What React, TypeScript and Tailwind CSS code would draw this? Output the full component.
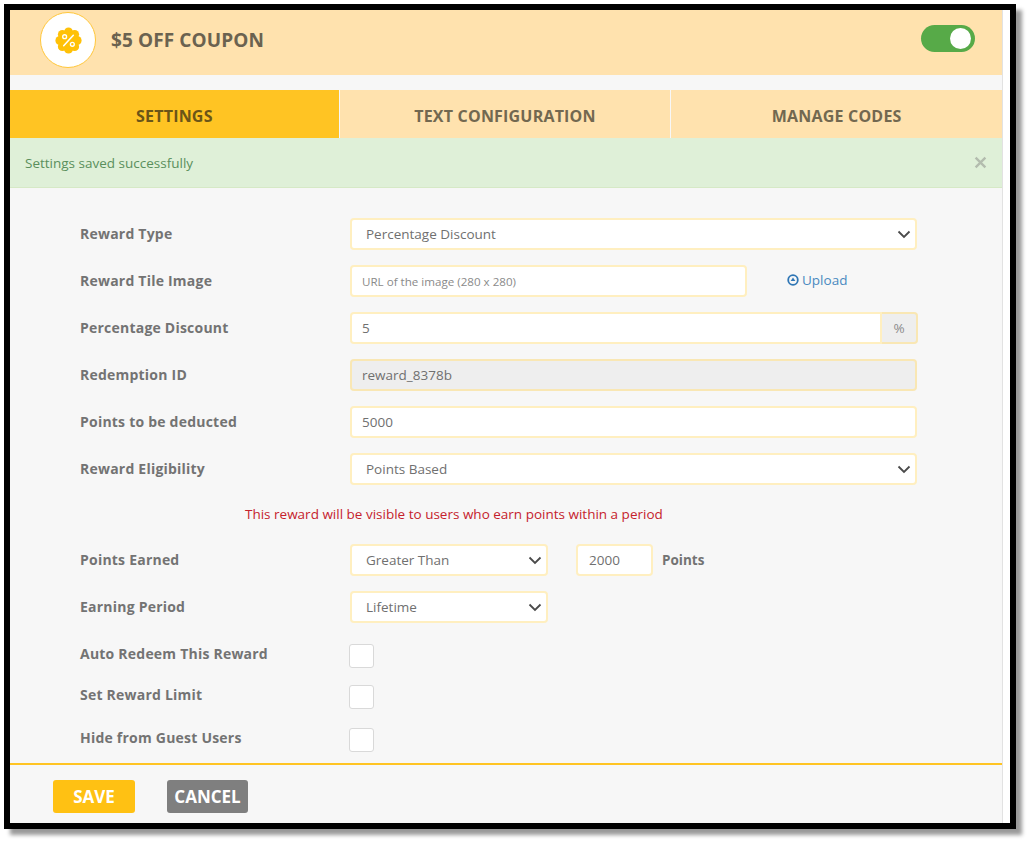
import React from 'react';

const font = { fontFamily: '"Open Sans", sans-serif' };

const Label = ({ children }: { children: React.ReactNode }) => (
  <label className="w-[340px] shrink-0 pl-[70px] pb-[2px] text-[14px] font-bold tracking-[0.22px] text-[#737373]">{children}</label>
);

const Chevron = () => (
  <svg viewBox="0 0 14 9" className="absolute right-[6px] top-[12px] w-[14px] h-[9px] pointer-events-none">
    <path d="M1.5 1.5L7 7l5.5-5.5" fill="none" stroke="#4a4a4a" strokeWidth="1.8" />
  </svg>
);

const Select = ({ value, width }: { value: string; width: string }) => (
  <div className={`relative ${width}`}>
    <select
      defaultValue={value}
      className="w-full h-[32px] appearance-none bg-white border-2 border-[#ffefc0] rounded-[4px] pl-[14px] text-[13.5px] text-[#707070] outline-none"
    >
      <option>{value}</option>
    </select>
    <Chevron />
  </div>
);

const Row = ({ label, children }: { label: string; children: React.ReactNode }) => (
  <div className="flex items-center h-[32px]">
    <Label>{label}</Label>
    {children}
  </div>
);

const CheckRow = ({ label, className }: { label: string; className?: string }) => (
  <div className={`flex items-center h-[24px] ${className ?? ''}`}>
    <label className="w-[339px] shrink-0 pl-[70px] pb-[6px] text-[14px] font-bold tracking-[0.22px] text-[#737373]">{label}</label>
    <span className="w-[25px] h-[24px] bg-white border border-[#d9d9d9] rounded-[3px]" />
  </div>
);

const Tab = ({ label, width, active }: { label: string; width: string; active?: boolean }) => (
  <div
    className={`${width} h-full flex items-center justify-center pt-[3px] text-[16px] font-bold tracking-[0.2px] ${
      active ? 'bg-[#ffc423] text-[#6b5518]' : 'bg-[#ffe2ae] text-[#726850]'
    }`}
  >
    {label}
  </div>
);

const BadgeIcon = () => (
  <svg viewBox="0 0 28 28" className="w-[27px] h-[27px]">
    <g fill="#ffc107">
      <circle cx="14" cy="14" r="10.5" />
      <circle cx="14" cy="5" r="4.6" />
      <circle cx="14" cy="23" r="4.6" />
      <circle cx="5" cy="14" r="4.6" />
      <circle cx="23" cy="14" r="4.6" />
      <circle cx="7.6" cy="7.6" r="4.6" />
      <circle cx="20.4" cy="7.6" r="4.6" />
      <circle cx="7.6" cy="20.4" r="4.6" />
      <circle cx="20.4" cy="20.4" r="4.6" />
    </g>
    <path d="M9 19.5L19 8.5" stroke="#fff" strokeWidth="1.6" strokeLinecap="round" />
    <circle cx="10" cy="10" r="2" fill="none" stroke="#fff" strokeWidth="1.4" />
    <circle cx="18" cy="18" r="2" fill="none" stroke="#fff" strokeWidth="1.4" />
  </svg>
);

const UploadIcon = () => (
  <svg viewBox="0 0 12 12" className="w-[12px] h-[12px] mr-[3px]">
    <circle cx="6" cy="6" r="4.8" fill="none" stroke="#2f76b5" strokeWidth="1.8" />
    <path d="M6 3.4L8.4 7H3.6z" fill="#2f76b5" />
  </svg>
);

export default function App() {
  return (
    <div className="pl-[4px] pt-[4px] bg-white w-[1029px] h-[842px]" style={font}>
      <div className="w-[1012px] h-[825px] border-[6px] border-black bg-white shadow-[6px_6px_4px_rgba(0,0,0,0.4)]">
        <div className="w-[993px] h-full bg-[#f7f7f7] border-r border-[#e2e2e2]">
          {/* Header */}
          <div className="h-[65px] bg-[#ffe2ae] flex items-center justify-between pl-[30px] pr-[27px] pb-[5px]">
            <div className="flex items-center">
              <div className="w-[56px] h-[56px] rounded-full bg-white border border-[#ffc73a] flex items-center justify-center">
                <BadgeIcon />
              </div>
              <h1 className="ml-[15px] text-[19px] font-bold tracking-[0.1px] text-[#6b6250]">$5 OFF COUPON</h1>
            </div>
            <div className="w-[54px] h-[27px] mb-[3px] rounded-full bg-[#57aa48] flex items-center justify-end pr-[4px]">
              <span className="w-[21px] h-[21px] rounded-full bg-white" />
            </div>
          </div>

          {/* Tabs */}
          <div className="mt-[15px] h-[48px] flex gap-px">
            <Tab label="SETTINGS" width="w-[329px]" active />
            <Tab label="TEXT CONFIGURATION" width="w-[331px]" />
            <Tab label="MANAGE CODES" width="w-[331px]" />
          </div>

          {/* Alert */}
          <div className="h-[50px] bg-[#dff0d8] border-b border-[#d6e9c6] flex items-center justify-between pl-[15px] pr-[15px]">
            <span className="pt-[1px] text-[13.5px] text-[#5a8f5c]">Settings saved successfully</span>
            <svg viewBox="0 0 12 12" className="w-[13px] h-[13px]">
              <path d="M1.5 1.5l9 9M10.5 1.5l-9 9" stroke="#b3bcae" strokeWidth="2.2" />
            </svg>
          </div>

          {/* Form */}
          <div className="pt-[30px] flex flex-col gap-[15px]">
            <Row label="Reward Type">
              <Select value="Percentage Discount" width="w-[567px]" />
            </Row>
            <Row label="Reward Tile Image">
              <input
                placeholder="URL of the image (280 x 280)"
                className="w-[397px] h-[32px] bg-white border-2 border-[#ffefc0] rounded-[4px] pl-[10px] text-[11.6px] placeholder:text-[#8a8a8a] outline-none"
              />
              <a className="ml-[40px] pb-[2px] flex items-center text-[13.5px] text-[#4a89c0]">
                <UploadIcon />
                Upload
              </a>
            </Row>
            <Row label="Percentage Discount">
              <div className="flex w-[568px] h-[32px]">
                <input
                  readOnly
                  value="5"
                  className="flex-1 min-w-0 bg-white border-2 border-[#ffefc0] rounded-l-[4px] pl-[10px] text-[13.5px] text-[#707070] outline-none"
                />
                <span className="w-[36px] flex items-center justify-center bg-[#eeeeee] border-2 border-l-0 border-[#f9e7b4] rounded-r-[4px] text-[13.5px] text-[#8c8c8c]">
                  %
                </span>
              </div>
            </Row>
            <Row label="Redemption ID">
              <input
                readOnly
                value="reward_8378b"
                className="w-[567px] h-[32px] bg-[#eeeeee] border-2 border-[#f9e7b4] rounded-[4px] pl-[10px] text-[13.5px] text-[#707070] outline-none"
              />
            </Row>
            <Row label="Points to be deducted">
              <input
                readOnly
                value="5000"
                className="w-[567px] h-[32px] bg-white border-2 border-[#ffefc0] rounded-[4px] pl-[10px] text-[13.5px] text-[#707070] outline-none"
              />
            </Row>
            <Row label="Reward Eligibility">
              <Select value="Points Based" width="w-[567px]" />
            </Row>

            <p className="pl-[235px] mb-[1px] h-[28px] leading-[28px] text-[13.5px] text-[#c5222c]">
              This reward will be visible to users who earn points within a period
            </p>

            <Row label="Points Earned">
              <Select value="Greater Than" width="w-[198px]" />
              <input
                readOnly
                value="2000"
                className="ml-[28px] w-[77px] h-[32px] bg-white border-2 border-[#ffefc0] rounded-[4px] pl-[11px] text-[13.5px] text-[#707070] outline-none"
              />
              <span className="ml-[9px] text-[13.5px] font-bold text-[#737373]">Points</span>
            </Row>
            <Row label="Earning Period">
              <Select value="Lifetime" width="w-[198px]" />
            </Row>

            <div className="mt-[6px] flex flex-col gap-[17px]">
              <CheckRow label="Auto Redeem This Reward" />
              <CheckRow label="Set Reward Limit" />
              <CheckRow label="Hide from Guest Users" className="mt-[2px]" />
            </div>
          </div>

          {/* Footer */}
          <div className="mt-[11px] border-t-2 border-[#ffc423] pt-[15px] pl-[43px] flex gap-[32px]">
            <button className="w-[82px] h-[33px] rounded-[3px] bg-[#ffc113] text-white text-[17px] font-bold">SAVE</button>
            <button className="w-[81px] h-[33px] rounded-[3px] bg-[#7f7f7f] text-white text-[17px] font-bold">CANCEL</button>
          </div>
        </div>
      </div>
    </div>
  );
}
